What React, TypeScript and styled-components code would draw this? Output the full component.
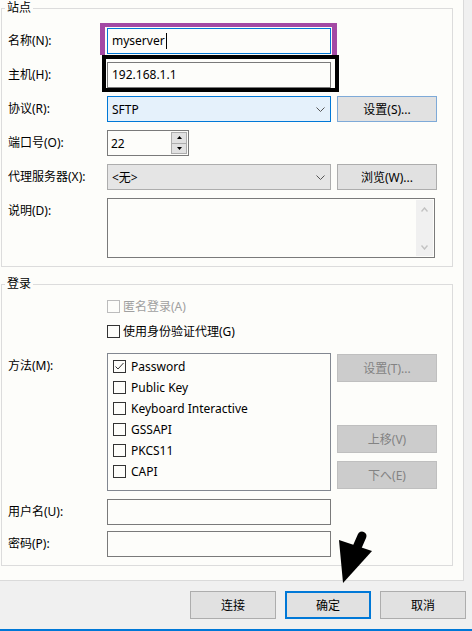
import React from 'react';
import styled, { createGlobalStyle } from 'styled-components';

const GlobalStyle = createGlobalStyle`
  html, body { margin: 0; padding: 0; background: #f0f0f0; }
  body {
    font-family: "Noto Sans", "Noto Sans CJK SC", sans-serif;
    font-size: 12px;
    color: #000;
  }
  * { box-sizing: border-box; }
`;

const Window = styled.div`
  position: relative;
  width: 472px;
  height: 631px;
  background: #f0f0f0;
  display: flex;
  flex-direction: column;
  overflow: hidden;
`;

const Panel = styled.div`
  width: 464px;
  height: 581px;
  flex: none;
  background: #fdfdfa;
  border-right: 1px solid #dadada;
  border-bottom: 1px solid #dadada;
  padding-left: 1px;
`;

const Group = styled.fieldset<{ $top: number }>`
  margin: ${p => p.$top}px 0 0 0;
  width: 452px;
  min-width: 0;
  padding: 0 0 8px 6px;
  border: 1px solid #dcdcdc;
`;

const Legend = styled.legend`
  margin-left: -3px;
  padding: 0 2px;
  font-size: 12px;
  line-height: 16px;
`;

const Row = styled.div<{ $top?: number }>`
  display: grid;
  grid-template-columns: 93px 224px 100px;
  column-gap: 6px;
  align-items: start;
  margin-top: ${p => p.$top ?? 0}px;
`;

const Label = styled.div`
  grid-column: 1;
  line-height: 26px;
  white-space: nowrap;
`;

const FieldCell = styled.div<{ $span?: boolean }>`
  grid-column: ${p => (p.$span ? '2 / 4' : '2')};
  position: relative;
`;

const TextBox = styled.div<{ $focused?: boolean }>`
  height: 26px;
  border: 1px solid ${p => (p.$focused ? '#0078d7' : '#7a7a7a')};
  background: #fdfdfa;
  padding: 0 4px;
  line-height: 24px;
  display: flex;
  align-items: center;
`;

const Caret = styled.span`
  display: inline-block;
  width: 1px;
  height: 16px;
  margin-left: 1px;
  background: #000;
`;

const Highlight = styled.span<{ $color: string; $inset: string; $widths: string }>`
  position: absolute;
  inset: ${p => p.$inset};
  border-style: solid;
  border-color: ${p => p.$color};
  border-width: ${p => p.$widths};
  pointer-events: none;
`;

const Select = styled.div<{ $active?: boolean }>`
  height: 26px;
  border: 1px solid ${p => (p.$active ? '#0078d7' : '#adadad')};
  background: ${p => (p.$active ? '#e5f1fb' : '#e5e5e5')};
  padding: 0 5px 0 4px;
  display: flex;
  align-items: center;
  justify-content: space-between;
`;

const Chevron = () => (
  <svg width="9" height="5" viewBox="0 0 9 5">
    <polyline points="0.5,0.5 4.5,4.5 8.5,0.5" fill="none" stroke="#555" strokeWidth="1" />
  </svg>
);

const SpinBox = styled.div`
  width: 82px;
  height: 26px;
  border: 1px solid #7a7a7a;
  background: #fdfdfa;
  display: flex;
  align-items: center;
  justify-content: space-between;
  padding: 1px 1px 1px 3px;
`;

const SpinButtons = styled.div`
  width: 16px;
  height: 100%;
  border: 1px solid #acacac;
  display: flex;
  flex-direction: column;
`;

const SpinButton = styled.div`
  flex: 1;
  background: #e1e1e1;
  display: flex;
  align-items: center;
  justify-content: center;
  & + & { border-top: 1px solid #acacac; }
`;

const Triangle = ({ up }: { up?: boolean }) => (
  <svg width="5" height="3" viewBox="0 0 5 3">
    <polygon points={up ? '0,3 5,3 2.5,0' : '0,0 5,0 2.5,3'} fill="#000" />
  </svg>
);

const TextArea = styled.div`
  width: 328px;
  height: 60px;
  border: 1px solid #7a7a7a;
  background: #fdfdfa;
  padding: 1px;
  display: flex;
  justify-content: flex-end;
`;

const ScrollTrack = styled.div`
  width: 17px;
  height: 100%;
  background: #f0f0f0;
  display: flex;
  flex-direction: column;
  justify-content: space-between;
  align-items: center;
  padding: 7px 0 6px;
`;

const ScrollArrow = ({ up }: { up?: boolean }) => (
  <svg width="7" height="5" viewBox="0 0 7 5">
    <polyline
      points={up ? '0.5,4.5 3.5,1 6.5,4.5' : '0.5,0.5 3.5,4 6.5,0.5'}
      fill="none"
      stroke="#c2c2c2"
      strokeWidth="1.4"
    />
  </svg>
);

const Button = styled.button<{ $h: number; $w?: number; $accent?: string; $disabled?: boolean }>`
  width: ${p => p.$w ?? 100}px;
  height: ${p => p.$h}px;
  margin: 0;
  padding: 0;
  font: inherit;
  font-size: 12px;
  color: ${p => (p.$disabled ? '#838383' : '#000')};
  background: ${p => (p.$disabled ? '#cccccc' : '#e1e1e1')};
  border: ${p => (p.$accent ? `${p.$accent}` : p.$disabled ? '1px solid #bfbfbf' : '1px solid #adadad')};
`;

const CheckRow = styled.div`
  grid-column: 2 / 4;
  height: 20px;
  display: flex;
  align-items: center;
  gap: 3px;
`;

const CheckText = styled.span<{ $disabled?: boolean }>`
  color: ${p => (p.$disabled ? '#a0a0a0' : '#000')};
  white-space: nowrap;
`;

const Box = styled.span<{ $disabled?: boolean }>`
  width: 13px;
  height: 13px;
  flex: none;
  border: 1px solid ${p => (p.$disabled ? '#bcbcbc' : '#333')};
  background: #fdfdfa;
  display: flex;
  align-items: center;
  justify-content: center;
`;

const CheckBox = ({ checked, disabled }: { checked?: boolean; disabled?: boolean }) => (
  <Box $disabled={disabled}>
    {checked && (
      <svg width="11" height="11" viewBox="0 0 11 11">
        <polyline points="1.5,5.5 4,8 9.5,2" fill="none" stroke="#333" strokeWidth="1" />
      </svg>
    )}
  </Box>
);

const ListBox = styled.div`
  height: 138px;
  border: 1px solid #828790;
  background: #fdfdfa;
  padding: 2px 0 0 5px;
`;

const ListItem = styled.div`
  height: 21px;
  display: flex;
  align-items: center;
  gap: 5px;
  white-space: nowrap;
`;

const SideButtons = styled.div`
  grid-column: 3;
  height: 138px;
  padding: 1px 0 2px;
  display: flex;
  flex-direction: column;
  justify-content: space-between;
`;

const ButtonStack = styled.div`
  display: flex;
  flex-direction: column;
  gap: 8px;
`;

const Footer = styled.div`
  flex: 1;
  display: flex;
  justify-content: flex-end;
  align-items: flex-start;
  gap: 9px;
  padding: 10px 6px 0 0;
  border-bottom: 2px solid #0078d7;
`;

const Pointer = styled.svg`
  position: absolute;
  left: 335px;
  top: 528px;
`;

const methods = [
  { name: 'Password', checked: true },
  { name: 'Public Key' },
  { name: 'Keyboard Interactive' },
  { name: 'GSSAPI' },
  { name: 'PKCS11' },
  { name: 'CAPI' },
];

const App: React.FC = () => {
  return (
    <Window>
      <GlobalStyle />
      <Panel>
        <Group $top={0}>
          <Legend>站点</Legend>
          <Row $top={12}>
            <Label>名称(N):</Label>
            <FieldCell>
              <TextBox $focused>
                myserver
                <Caret />
              </TextBox>
              <Highlight $color="#a349a4" $inset="-5px -6px -1px -7px" $widths="4px 5px 0 5px" />
            </FieldCell>
          </Row>
          <Row $top={8}>
            <Label>主机(H):</Label>
            <FieldCell>
              <TextBox>192.168.1.1</TextBox>
              <Highlight $color="#000" $inset="-7px -8px -4px -5px" $widths="4px" />
            </FieldCell>
          </Row>
          <Row $top={8}>
            <Label>协议(R):</Label>
            <FieldCell>
              <Select $active>
                SFTP
                <Chevron />
              </Select>
            </FieldCell>
            <Button $h={26} $accent="1px solid #7eaad8">设置(S)...</Button>
          </Row>
          <Row $top={8}>
            <Label>端口号(O):</Label>
            <FieldCell>
              <SpinBox>
                22
                <SpinButtons>
                  <SpinButton><Triangle up /></SpinButton>
                  <SpinButton><Triangle /></SpinButton>
                </SpinButtons>
              </SpinBox>
            </FieldCell>
          </Row>
          <Row $top={8}>
            <Label>代理服务器(X):</Label>
            <FieldCell>
              <Select>
                &lt;无&gt;
                <Chevron />
              </Select>
            </FieldCell>
            <Button $h={26}>浏览(W)...</Button>
          </Row>
          <Row $top={8}>
            <Label>说明(D):</Label>
            <FieldCell $span>
              <TextArea>
                <ScrollTrack>
                  <ScrollArrow up />
                  <ScrollArrow />
                </ScrollTrack>
              </TextArea>
            </FieldCell>
          </Row>
        </Group>

        <Group $top={9}>
          <Legend>登录</Legend>
          <Row $top={4}>
            <CheckRow>
              <CheckBox disabled />
              <CheckText $disabled>匿名登录(A)</CheckText>
            </CheckRow>
          </Row>
          <Row $top={5}>
            <CheckRow>
              <CheckBox />
              <CheckText>使用身份验证代理(G)</CheckText>
            </CheckRow>
          </Row>
          <Row $top={12}>
            <Label>方法(M):</Label>
            <FieldCell>
              <ListBox>
                {methods.map(m => (
                  <ListItem key={m.name}>
                    <CheckBox checked={m.checked} />
                    {m.name}
                  </ListItem>
                ))}
              </ListBox>
            </FieldCell>
            <SideButtons>
              <Button $h={28} $disabled>设置(T)...</Button>
              <ButtonStack>
                <Button $h={28} $disabled>上移(V)</Button>
                <Button $h={28} $disabled>下へ(E)</Button>
              </ButtonStack>
            </SideButtons>
          </Row>
          <Row $top={8}>
            <Label>用户名(U):</Label>
            <FieldCell>
              <TextBox />
            </FieldCell>
          </Row>
          <Row $top={6}>
            <Label>密码(P):</Label>
            <FieldCell>
              <TextBox />
            </FieldCell>
          </Row>
        </Group>
      </Panel>

      <Footer>
        <Button $h={28} $w={86}>连接</Button>
        <Button $h={28} $w={86} $accent="2px solid #0078d7">确定</Button>
        <Button $h={28} $w={86}>取消</Button>
      </Footer>

      <Pointer width="40" height="58" viewBox="0 0 40 58">
        <line x1="27" y1="8" x2="20" y2="24" stroke="#000" strokeWidth="9" strokeLinecap="round" />
        <polygon points="4,12 37,23 8,55" fill="#000" />
      </Pointer>
    </Window>
  );
};

export default App;
